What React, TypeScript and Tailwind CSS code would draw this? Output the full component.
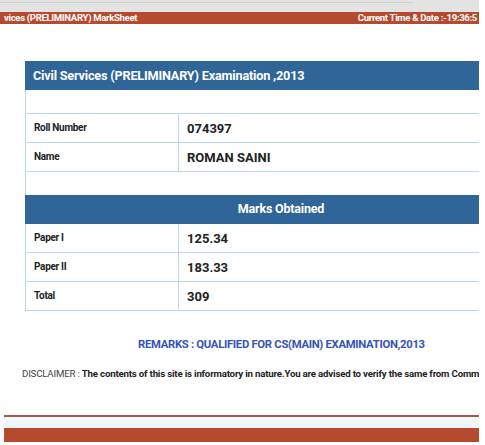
import React from 'react';

const info = [
  { label: 'Roll Number', value: '074397' },
  { label: 'Name', value: 'ROMAN SAINI' },
];

const marks = [
  { label: 'Paper I', value: '125.34' },
  { label: 'Paper II', value: '183.33' },
  { label: 'Total', value: '309' },
];

function Row({ label, value }: { label: string; value: string }) {
  return (
    <div className="flex h-[29px] border-b border-[#b9d9e8]">
      <div className="w-[153px] shrink-0 border-r border-[#b9d9e8] pl-2 pt-[6px] text-[10px] font-bold text-[#222] tracking-[-0.3px]">
        {label}
      </div>
      <div className="pl-2 pt-[5px] text-[13px] font-bold text-[#222]">{value}</div>
    </div>
  );
}

export default function App() {
  return (
    <div className="w-[485px] h-[445px] bg-white overflow-hidden" style={{ fontFamily: 'Roboto, "Liberation Sans", sans-serif' }}>
      <div className="w-[479px] overflow-hidden">
        <div className="h-[12px] bg-[#e3e3e3] pt-[2px]">
          <div className="h-px w-[413px] bg-[#cfcfcf]" />
        </div>
        <div className="h-[12px] bg-[#b64a2f] flex justify-between items-center pl-[4px] pr-[2px] text-[9.5px] font-bold text-white leading-none whitespace-nowrap">
          <span className="tracking-[-0.3px]">vices (PRELIMINARY) MarkSheet</span>
          <span className="tracking-[-0.3px]">Current Time &amp; Date :-19:36:5</span>
        </div>

        <div className="ml-[25px] mt-[37px] w-[512px]">
          <div className="h-[29px] bg-[#2f6597] pl-2 flex items-center text-[12.7px] font-bold text-white tracking-[-0.2px]">
            Civil Services (PRELIMINARY) Examination ,2013
          </div>
          <div className="h-[24px] border-l border-b border-[#b9d9e8]" />
          <div className="border-l border-[#b9d9e8]">
            {info.map((r) => (
              <Row key={r.label} {...r} />
            ))}
          </div>
          <div className="h-[23px] border-l border-[#b9d9e8]" />
          <div className="h-[29px] bg-[#2f6597] flex items-center justify-center text-[12.5px] font-bold text-white tracking-[-0.2px]">
            Marks Obtained
          </div>
          <div className="border-l border-[#b9d9e8]">
            {marks.map((r) => (
              <Row key={r.label} {...r} />
            ))}
          </div>
        </div>

        <div className="mt-[26px] pl-[138px] text-[11.3px] font-bold text-[#3653b4] tracking-[-0.3px] whitespace-nowrap">
          REMARKS : QUALIFIED FOR CS(MAIN) EXAMINATION,2013
        </div>

        <div className="mt-[13px] pl-[22px] text-[9.7px] text-[#222] whitespace-nowrap tracking-[-0.2px]">
          <span className="text-[#444]">DISCLAIMER : </span>
          <span className="font-bold">
            The contents of this site is informatory in nature.You are advised to verify the same from Commission
          </span>
        </div>

        <div className="mt-[34px] ml-[4px]">
          <div className="h-[2px] bg-[#a65a48]" />
          <div className="h-[11px] bg-[#eef5fb]" />
          <div className="h-[14px] bg-[#b64a2f]" />
        </div>
      </div>
    </div>
  );
}
